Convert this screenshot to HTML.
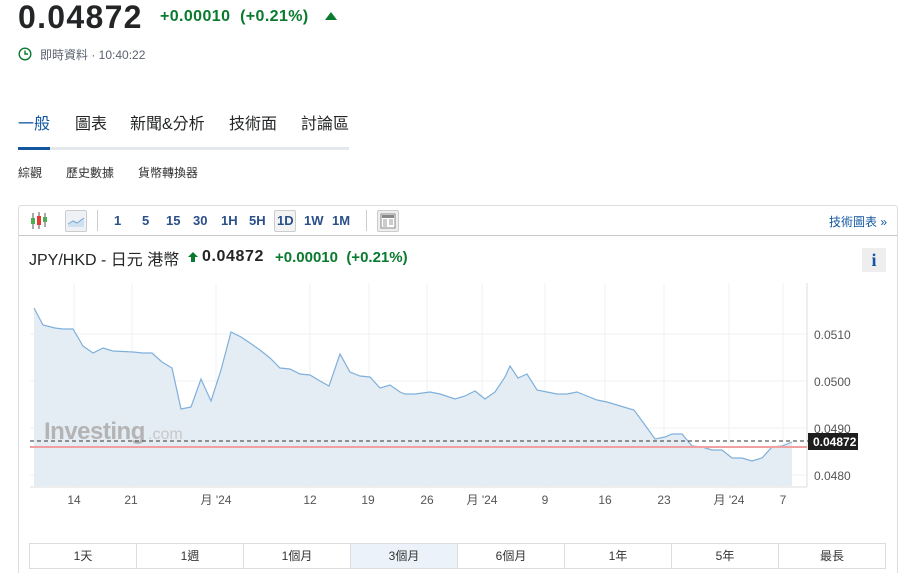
<!DOCTYPE html>
<html><head><meta charset="utf-8"><style>
*{margin:0;padding:0;box-sizing:border-box}
html,body{width:901px;height:573px;overflow:hidden}
body{background:#fff;font-family:"Liberation Sans","Noto Sans CJK TC",sans-serif;color:#232526;position:relative}
.a{position:absolute;white-space:nowrap}
.g{color:#0a7a2f}
.tf{position:absolute;top:213px;font-size:13px;font-weight:bold;color:#2a4f8a}
.btn{position:absolute;top:543px;height:26px;border:1px solid #ddd;font-size:12px;color:#333;text-align:center;line-height:24px}
</style></head><body>
<div class="a" style="left:18px;top:-1px;font-size:32px;font-weight:bold;letter-spacing:1.3px;line-height:36px">0.04872</div>
<div class="a g" style="left:160px;top:8px;font-size:16px;font-weight:bold;letter-spacing:0.4px">+0.00010&nbsp;&nbsp;(+0.21%)</div>
<svg class="a" style="left:325px;top:12px" width="12" height="9"><polygon points="6,0 12,8 0,8" fill="#0a7a2f"/></svg>
<svg class="a" style="left:18px;top:47px" width="14" height="14"><circle cx="7" cy="7" r="5.8" fill="none" stroke="#0a7a2f" stroke-width="1.4"/><path d="M7 3.5V7h3" fill="none" stroke="#0a7a2f" stroke-width="1.4"/></svg>
<div class="a" style="left:40px;top:46px;font-size:12px;color:#5b616e">即時資料 · 10:40:22</div>
<div class="a" style="left:18px;top:110px;font-size:16px;color:#1256a0">一般</div>
<div class="a" style="left:75px;top:110px;font-size:16px">圖表</div>
<div class="a" style="left:130px;top:110px;font-size:16px">新聞&amp;分析</div>
<div class="a" style="left:229px;top:110px;font-size:16px">技術面</div>
<div class="a" style="left:301px;top:110px;font-size:16px">討論區</div>
<div class="a" style="left:18px;top:147px;width:331px;height:3px;background:#e6e9eb"></div>
<div class="a" style="left:18px;top:147px;width:32px;height:3px;background:#1256a0"></div>
<div class="a" style="left:18px;top:164px;font-size:12px;color:#333">綜觀</div>
<div class="a" style="left:66px;top:164px;font-size:12px;color:#333">歷史數據</div>
<div class="a" style="left:138px;top:164px;font-size:12px;color:#333">貨幣轉換器</div>

<div class="a" style="left:18px;top:205px;width:880px;height:375px;border:1px solid #ddd;border-radius:3px"></div>
<div class="a" style="left:19px;top:235px;width:878px;height:1px;background:#c8c8c8"></div>
<svg class="a" style="left:29px;top:211px" width="20" height="20"><path d="M4 2v16M10 1v17M16 2v14" stroke="#555"/><rect x="2" y="7" width="4" height="6" fill="#4caf50"/><rect x="8" y="5" width="4" height="9" fill="#e53935"/><rect x="14" y="6" width="4" height="5" fill="#4caf50"/></svg>
<div class="a" style="left:65px;top:210px;width:22px;height:22px;border:1px solid #ccc;background:#eef1f5;border-radius:2px"></div>
<svg class="a" style="left:67px;top:214px" width="18" height="14"><path d="M1 10l5-3 4 2 7-5V13H1z" fill="#cfe0f0"/><path d="M1 10l5-3 4 2 7-5" fill="none" stroke="#7ba7d4"/></svg>
<div class="a" style="left:97px;top:210px;width:1px;height:21px;background:#ccc"></div>
<div class="tf" style="left:114px">1</div>
<div class="tf" style="left:142px">5</div>
<div class="tf" style="left:166px">15</div>
<div class="tf" style="left:193px">30</div>
<div class="tf" style="left:221px">1H</div>
<div class="tf" style="left:249px">5H</div>
<div class="a" style="left:274px;top:210px;width:22px;height:22px;border:1px solid #ccc;background:#f3f3f3;border-radius:2px"></div>
<div class="tf" style="left:277px">1D</div>
<div class="tf" style="left:304px">1W</div>
<div class="tf" style="left:332px">1M</div>
<div class="a" style="left:366px;top:210px;width:1px;height:21px;background:#ccc"></div>
<div class="a" style="left:377px;top:210px;width:22px;height:22px;border:1px solid #ccc;background:#eee;border-radius:2px"></div>
<svg class="a" style="left:380px;top:213px" width="16" height="16"><rect x="1" y="1" width="14" height="14" fill="#fff" stroke="#888"/><rect x="2" y="2" width="12" height="3" fill="#888"/><path d="M3 7h4M3 9h4M3 11h4M3 13h4M9 7h4M9 9h4M9 11h4" stroke="#999"/></svg>
<div class="a" style="left:829px;top:213px;font-size:12px;color:#1256a0">技術圖表 »</div>

<div class="a" style="left:29px;top:246px;font-size:16px">JPY/HKD - 日元 港幣</div>
<svg class="a" style="left:188px;top:252px" width="10" height="11"><polygon points="5,0 10,5 7,5 7,10 3,10 3,5 0,5" fill="#0a7a2f"/></svg>
<div class="a" style="left:202px;top:248px;font-size:16px;font-weight:bold;letter-spacing:0.6px">0.04872</div>
<div class="a g" style="left:275px;top:249px;font-size:15px;font-weight:bold">+0.00010&nbsp;&nbsp;(+0.21%)</div>
<div class="a" style="left:862px;top:248px;width:24px;height:24px;background:#eee;color:#1256a0;font-family:'Liberation Serif',serif;font-weight:bold;font-size:18px;text-align:center;line-height:24px">i</div>

<svg class="a" style="left:0;top:0" width="901" height="573">
<g stroke="#eef0f3" stroke-width="1">
<path d="M30 334H807M30 381H807M30 428H807M30 475H807"/>
<path d="M74 283V487M132 283V487M216 283V487M310 283V487M369 283V487M427 283V487M482 283V487M545 283V487M605 283V487M664 283V487M729 283V487M783 283V487"/>
</g>
<path d="M807 283V487M30 487H807" stroke="#ddd"/>
<path d="M34 308L43 325L55 328L63 329L73 329L83 346L93 353L103 348L113 351L133 352L143 353L152 353L162 362L172 368L181 409L191 407L201 379L211 401L221 370L231 332L241 337L250 343L260 350L270 358L280 368L290 369L300 374L310 375L320 381L329 386L340 354L350 372L360 376L370 377L380 388L390 385L400 392L405 394L415 394L430 392L440 394L455 399L465 396L475 391L485 399L495 392L505 377L510 366L518 378L527 374L537 390L547 392L557 394L567 394L577 392L587 396L597 400L607 402L617 405L627 408L634 410L645 425L655 439L665 437L672 434L682 434L692 446L702 447L712 450L722 450L732 458L742 458L752 461L762 458L772 447L782 446L792 442L792 486L34 486Z" fill="#e4ecf4"/>
<path d="M34 308L43 325L55 328L63 329L73 329L83 346L93 353L103 348L113 351L133 352L143 353L152 353L162 362L172 368L181 409L191 407L201 379L211 401L221 370L231 332L241 337L250 343L260 350L270 358L280 368L290 369L300 374L310 375L320 381L329 386L340 354L350 372L360 376L370 377L380 388L390 385L400 392L405 394L415 394L430 392L440 394L455 399L465 396L475 391L485 399L495 392L505 377L510 366L518 378L527 374L537 390L547 392L557 394L567 394L577 392L587 396L597 400L607 402L617 405L627 408L634 410L645 425L655 439L665 437L672 434L682 434L692 446L702 447L712 450L722 450L732 458L742 458L752 461L762 458L772 447L782 446L792 442" fill="none" stroke="#7fb0da" stroke-width="1.2"/>
<text x="44" y="439" font-family="Liberation Sans" font-weight="bold" font-size="24" fill="#b4b4b4" letter-spacing="-0.5">Investing</text>
<text x="148" y="439" font-family="Liberation Sans" font-size="16" fill="#c8c8c8">.com</text>
<path d="M30 447H807" stroke="#f0a0a0" stroke-width="2"/>
<path d="M30 441H808" stroke="#333" stroke-dasharray="4,3"/>
<rect x="808" y="433" width="50" height="17" fill="#1e1e1e"/>
<text x="813" y="446" font-family="Liberation Sans" font-weight="bold" font-size="12" fill="#fff">0.04872</text>
<g font-family="Liberation Sans" font-size="12" fill="#555">
<text x="814" y="339">0.0510</text><text x="814" y="386">0.0500</text><text x="814" y="433">0.0490</text><text x="814" y="480">0.0480</text>
</g>
<g font-family="Liberation Sans,Noto Sans CJK TC" font-size="12" fill="#555" text-anchor="middle">
<text x="74" y="504">14</text><text x="131" y="504">21</text><text x="216" y="504">月 '24</text><text x="310" y="504">12</text><text x="368" y="504">19</text><text x="427" y="504">26</text><text x="482" y="504">月 '24</text><text x="545" y="504">9</text><text x="605" y="504">16</text><text x="664" y="504">23</text><text x="729" y="504">月 '24</text><text x="783" y="504">7</text>
</g>
</svg>

<div class="btn" style="left:29px;width:108px">1天</div>
<div class="btn" style="left:136px;width:108px">1週</div>
<div class="btn" style="left:243px;width:108px">1個月</div>
<div class="btn" style="left:350px;width:108px;background:#ebf2fa">3個月</div>
<div class="btn" style="left:457px;width:108px">6個月</div>
<div class="btn" style="left:564px;width:108px">1年</div>
<div class="btn" style="left:671px;width:108px">5年</div>
<div class="btn" style="left:778px;width:108px">最長</div>
</body></html>
